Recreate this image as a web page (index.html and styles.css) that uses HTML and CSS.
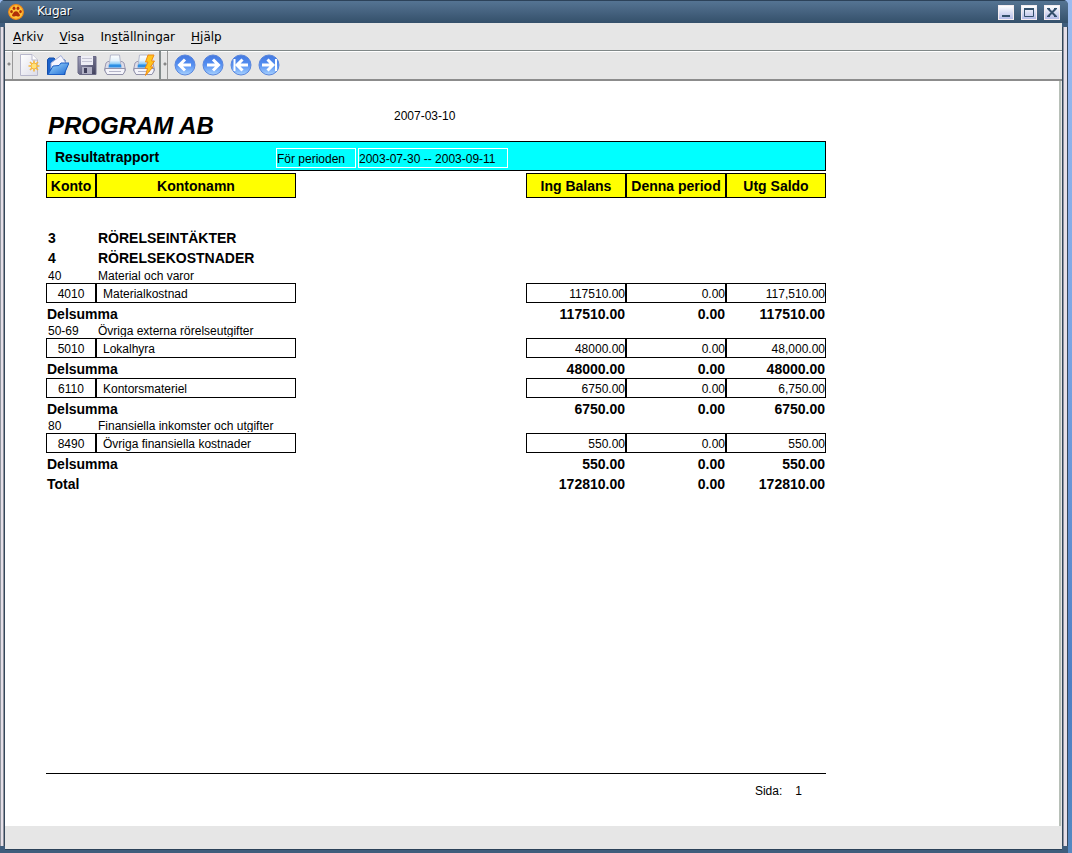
FILE: index.html
```html
<!DOCTYPE html>
<html lang="sv">
<head>
<meta charset="utf-8">
<title>Kugar</title>
<link rel="stylesheet" href="styles.css">
</head>
<body>
<svg class="defs" width="0" height="0" aria-hidden="true">
  <defs>
    <linearGradient id="blue" x1="0" y1="0" x2="0" y2="1"><stop offset="0" stop-color="#4478e0"/><stop offset=".5" stop-color="#5590f2"/><stop offset="1" stop-color="#a8d2ff"/></linearGradient>
    <linearGradient id="folder" x1="0" y1="0" x2="1" y2="1"><stop offset="0" stop-color="#a4dcff"/><stop offset="1" stop-color="#1c6ad4"/></linearGradient>
    <linearGradient id="page" x1="0" y1="0" x2="1" y2="1"><stop offset="0" stop-color="#fff"/><stop offset="1" stop-color="#dcdce8"/></linearGradient>
    <linearGradient id="metal" x1="0" y1="0" x2="1" y2="1"><stop offset="0" stop-color="#a4a4c0"/><stop offset="1" stop-color="#3c3c58"/></linearGradient>
    <linearGradient id="sheet" x1="0" y1="0" x2="0" y2="1"><stop offset="0" stop-color="#fff"/><stop offset=".5" stop-color="#e4f2fc"/><stop offset="1" stop-color="#56b4f4"/></linearGradient>
    <g id="printer">
      <path d="M2 9 4 7.500H18L20 9 21.500 16 19 20H3L.5 16Z" fill="#dcdce8" stroke="#9a9ab2"/>
      <path d="M6.500 1H15.500L17 12H5Z" fill="url(#sheet)" stroke="#b4b8cc"/>
      <path d="M5 10.500H17L17.500 13.500H4.500Z" fill="#2c8ee4"/>
      <path d="M1 14.500H21V17L19 20.500H3L1 17Z" fill="#f4f4fa" stroke="#9292aa"/>
      <path d="M5 17.500H17" stroke="#b4b4c8"/>
    </g>
  </defs>
</svg>
<div class="window">
  <header class="titlebar">
    <svg class="app-icon" viewBox="0 0 16 16" width="16" height="16" aria-hidden="true">
      <circle cx="8" cy="8" r="7.300" fill="#ffc43a" stroke="#f58a16" stroke-width="1.200"/>
      <g fill="#b03008"><ellipse cx="3.500" cy="7.600" rx="1.300" ry="1.600"/><ellipse cx="6" cy="4.200" rx="1.400" ry="1.700"/><ellipse cx="10" cy="4.200" rx="1.400" ry="1.700"/><ellipse cx="12.500" cy="7.600" rx="1.300" ry="1.600"/><path d="M8 7.200C10 7.200 10.500 9 11.600 10.300 12.500 12 11.300 13 9.800 12.400Q8 11.800 6.200 12.400C4.700 13 3.500 12 4.400 10.300 5.500 9 6 7.200 8 7.200Z"/></g>
    </svg>
    <h1 class="app-name">Kugar</h1>
    <div class="window-buttons">
      <button class="wbtn" aria-label="Minimera"><svg viewBox="0 0 14 13" width="14" height="13"><path d="M3 10H11" stroke="#34506c" stroke-width="2"/></svg></button>
      <button class="wbtn" aria-label="Maximera"><svg viewBox="0 0 14 13" width="14" height="13"><path d="M2.500 3V10.500H11.500V3" fill="none" stroke="#34506c"/><path d="M2 3H12" stroke="#34506c" stroke-width="2"/></svg></button>
      <button class="wbtn" aria-label="Stäng"><svg viewBox="0 0 14 13" width="14" height="13"><path d="M3 2.500 11 10.500M11 2.500 3 10.500" stroke="#34506c" stroke-width="2"/><path d="M2 2.500H5M9 2.500H12M2 10.500H5M9 10.500H12" stroke="#34506c"/></svg></button>
    </div>
  </header>
  <div class="frame">
    <nav class="menubar">
      <button class="menu"><u>A</u>rkiv</button>
      <button class="menu"><u>V</u>isa</button>
      <button class="menu">In<u>s</u>tällningar</button>
      <button class="menu"><u>H</u>jälp</button>
    </nav>
    <div class="toolbar">
      <span class="grip"></span>
      <div class="tools file-tools">
        <button class="tool" aria-label="Ny"><svg viewBox="0 0 22 22" width="22" height="22"><path d="M1.500 .5H13L18.500 6V21.500H1.500Z" fill="url(#page)" stroke="#b8b8cc"/><path d="M13 .5V6H18.500" fill="#fff" stroke="#b8b8cc"/><path d="M15 6.500V17.500M9.500 12H20.500M11 8 19 16M19 8 11 16" stroke="#f7b73c" stroke-width="1.600"/><circle cx="15" cy="12" r="3" fill="#ffe27a" stroke="#f5b640"/></svg></button>
        <button class="tool" aria-label="Öppna"><svg viewBox="0 0 22 22" width="22" height="22"><path d="M.5 20.500V5.500L2 4H7L9 6H18V20.500Z" fill="#1c64cc" stroke="#164ea8"/><path d="M4 9 14 1.500 19.500 10V15H4Z" fill="#f6f6ff" stroke="#a4b0d8"/><path d="M1 20.500 6 12 12 11.500 14 9H22L17 20.500Z" fill="url(#folder)" stroke="#1c5ec4"/></svg></button>
        <button class="tool" aria-label="Spara"><svg viewBox="0 0 22 22" width="22" height="22"><path d="M2 2.500H20V20.500H3.500L2 19Z" fill="url(#metal)" stroke="#6a6a86"/><path d="M5 2H17V11H5Z" fill="#eeeef6"/><path d="M6 4.500H16M6 7.500H16" stroke="#c4c4d4"/><path d="M6 13H16V20H6Z" fill="#b0b0c4"/><path d="M8 14H11V19H8Z" fill="#40405c"/></svg></button>
        <button class="tool" aria-label="Skriv ut"><svg viewBox="0 0 22 22" width="22" height="22"><use href="#printer"/></svg></button>
        <button class="tool" aria-label="Snabbutskrift"><svg viewBox="0 0 22 22" width="22" height="22"><use href="#printer"/><path d="M15 1H21L18.500 7H21.500L17.500 13H20L12.500 21.500 14.500 14.500H12L15 8H12.500Z" fill="#ffc51c" stroke="#f08a14"/></svg></button>
      </div>
      <span class="grip divided"></span>
      <div class="tools">
        <button class="tool" aria-label="Föregående sida"><svg viewBox="0 0 22 22" width="22" height="22"><circle cx="11" cy="11" r="10" fill="url(#blue)" stroke="#5a86dc"/><path d="M17 11H6M11 5.500 5.500 11 11 16.500" fill="none" stroke="#fff" stroke-width="3"/></svg></button>
        <button class="tool" aria-label="Nästa sida"><svg viewBox="0 0 22 22" width="22" height="22"><circle cx="11" cy="11" r="10" fill="url(#blue)" stroke="#5a86dc"/><path d="M5 11H16M11 5.500 16.500 11 11 16.500" fill="none" stroke="#fff" stroke-width="3"/></svg></button>
        <button class="tool" aria-label="Första sidan"><svg viewBox="0 0 22 22" width="22" height="22"><circle cx="11" cy="11" r="10" fill="url(#blue)" stroke="#5a86dc"/><path d="M18 11H8M12.500 5.500 7 11 12.500 16.500" fill="none" stroke="#fff" stroke-width="3"/><path d="M4.500 5V17" stroke="#fff" stroke-width="2"/></svg></button>
        <button class="tool" aria-label="Sista sidan"><svg viewBox="0 0 22 22" width="22" height="22"><circle cx="11" cy="11" r="10" fill="url(#blue)" stroke="#5a86dc"/><path d="M4 11H14M9.500 5.500 15 11 9.500 16.500" fill="none" stroke="#fff" stroke-width="3"/><path d="M18 5V17" stroke="#fff" stroke-width="2"/></svg></button>
      </div>
    </div>
    <main class="viewer">
      <article class="report">
        <div class="report-head">
          <h2 class="company">PROGRAM AB</h2>
          <time class="date">2007-03-10</time>
        </div>
        <div class="band">
          <h3 class="report-name">Resultatrapport</h3>
          <span class="field label">För perioden</span>
          <span class="field range">2003-07-30 -- 2003-09-11</span>
        </div>
        <table class="accounts">
          <colgroup><col class="c-no"><col class="c-name"><col class="c-gap"><col class="c-sum"><col class="c-sum"><col class="c-sum"></colgroup>
          <thead>
            <tr><th>Konto</th><th>Kontonamn</th><td></td><th>Ing Balans</th><th>Denna period</th><th>Utg Saldo</th></tr>
          </thead>
          <tbody>
            <tr class="spacer"><td colspan="6"></td></tr>
            <tr class="section"><td>3</td><td colspan="5">RÖRELSEINTÄKTER</td></tr>
            <tr class="section"><td>4</td><td colspan="5">RÖRELSEKOSTNADER</td></tr>
            <tr class="group"><td><div>40</div></td><td colspan="5"><div>Material och varor</div></td></tr>
            <tr class="account"><td>4010</td><td>Materialkostnad</td><td></td><td>117510.00</td><td>0.00</td><td>117,510.00</td></tr>
            <tr class="sum"><td colspan="3">Delsumma</td><td>117510.00</td><td>0.00</td><td>117510.00</td></tr>
            <tr class="group"><td><div>50-69</div></td><td colspan="5"><div>Övriga externa rörelseutgifter</div></td></tr>
            <tr class="account"><td>5010</td><td>Lokalhyra</td><td></td><td>48000.00</td><td>0.00</td><td>48,000.00</td></tr>
            <tr class="sum"><td colspan="3">Delsumma</td><td>48000.00</td><td>0.00</td><td>48000.00</td></tr>
            <tr class="account"><td>6110</td><td>Kontorsmateriel</td><td></td><td>6750.00</td><td>0.00</td><td>6,750.00</td></tr>
            <tr class="sum"><td colspan="3">Delsumma</td><td>6750.00</td><td>0.00</td><td>6750.00</td></tr>
            <tr class="group"><td><div>80</div></td><td colspan="5"><div>Finansiella inkomster och utgifter</div></td></tr>
            <tr class="account"><td>8490</td><td>Övriga finansiella kostnader</td><td></td><td>550.00</td><td>0.00</td><td>550.00</td></tr>
            <tr class="sum"><td colspan="3">Delsumma</td><td>550.00</td><td>0.00</td><td>550.00</td></tr>
            <tr class="sum"><td colspan="3">Total</td><td>172810.00</td><td>0.00</td><td>172810.00</td></tr>
          </tbody>
        </table>
        <footer class="report-foot"><span>Sida:</span><span>1</span></footer>
      </article>
    </main>
    <div class="statusbar"></div>
  </div>
</div>
</body>
</html>
```
FILE: styles.css
```css
* { box-sizing: border-box; }
body {
  margin: 0;
  padding-right: 4px;
  background: linear-gradient(#9cbcf0, #7ba5e4 40%, #4f7fc4 80%, #5489c2);
  font-family: "DejaVu Sans", Verdana, sans-serif;
  font-size: 12px;
  color: #000;
}
button { margin: 0; padding: 0; border: 0; background: none; font: inherit; color: inherit; }
svg { display: block; }
h1, h2, h3 { margin: 0; font-size: inherit; }
.defs { position: absolute; }

/* Side strips of the window frame, with darker blocks at the four corners. */
.window {
  display: flex;
  flex-direction: column;
  min-height: 100vh;
  border-radius: 5px 5px 0 0;
  overflow: hidden;
  background:
    linear-gradient(#3f5d7c, #3f5d7c) left top / 100% 27px no-repeat,
    linear-gradient(#3f5d7c, #3f5d7c) left bottom / 100% 7px no-repeat,
    linear-gradient(to right, #8e949e 1px, #e6dfe8 1px 3px, #8e949e 3px 4px, #34465a 4px 5px, transparent 5px),
    linear-gradient(to left, #34465a 1px, #e6dfe8 1px 4px, #8e949e 4px 5px, #34465a 5px 6px, transparent 6px);
}
.titlebar {
  display: flex;
  align-items: center;
  height: 23px;
  padding: 0 8px;
  border-top: 1px solid #2c4259;
  background: linear-gradient(#557493, #45627f 50%, #34506a);
  color: #fff;
}
.app-name { margin-left: 13px; font-weight: 400; line-height: 18px; padding-bottom: 2px; text-shadow: 1px 1px 0 #101820; }
.window-buttons { display: flex; gap: 7px; margin-left: auto; }
.wbtn {
  display: grid;
  place-items: center;
  width: 16px;
  height: 15px;
  border: 1px solid #f4ecf0;
  background: linear-gradient(#fff, #b4bce8);
}

.frame {
  display: flex;
  flex: 1;
  flex-direction: column;
  margin: 0 6px 3px 5px;
  border-bottom: 1px solid #2c4259;
  background: #e6e6e6;
}
.menubar {
  display: flex;
  align-items: center;
  gap: 16px;
  height: 27px;
  padding: 0 8px;
}
.menu { line-height: 20px; }
.menu u { text-underline-offset: 2px; }
.toolbar {
  display: flex;
  height: 31px;
  border-top: 1px solid #808888;
  border-bottom: 2px solid #8c8c8c;
  box-shadow: inset 0 1px #fff;
}
.grip {
  display: grid;
  place-items: center;
  width: 8px;
  border-right: 1px solid #999;
  background: radial-gradient(circle at 4px 13px, #888 1px, transparent 2px);
}
.divided { width: 9px; border-left: 2px solid #848c8c; }
.tools { display: flex; padding: 0 3px; }
.file-tools { padding-right: 1px; }
.tool { display: grid; place-items: center; width: 28px; height: 28px; }
.file-tools .tool:nth-child(odd):not(:first-child) { width: 29px; }

.viewer {
  display: flex;
  flex: 1;
  border-right: 2px solid #b8c0b8;
  margin-right: 1px;
  background: #fff;
}
.report {
  display: flex;
  flex-direction: column;
  width: 821px;
  padding: 26px 0 26px 41px;
  font-family: "Liberation Sans", Arial, sans-serif;
}
.report-head {
  display: grid;
  grid-template-columns: 346px 1fr;
  height: 34px;
  padding-left: 2px;
}
.company { font-size: 24px; line-height: 37px; font-style: italic; }
.date { line-height: 18px; }
.band {
  display: flex;
  height: 30px;
  padding-left: 8px;
  border: 1px solid #000;
  background: #0ff;
}
.report-name { width: 221px; font-size: 14px; line-height: 30px; }
.field {
  height: 20px;
  margin-top: 6px;
  border: 1px solid #fff;
  line-height: 20px;
  white-space: nowrap;
}
.label { width: 80px; }
.range { width: 150px; margin-left: 2px; }

.accounts {
  width: 780px;
  margin-top: 2px;
  border-spacing: 0;
  table-layout: fixed;
}
.c-no { width: 50px; }
.c-name { width: 200px; }
.c-gap { width: 230px; }
.c-sum { width: 100px; }
.accounts th, .accounts td { padding: 0; white-space: nowrap; }
.accounts th {
  height: 25px;
  padding-top: 1px;
  border: 1px solid #000;
  background: #ff0;
  font-size: 14px;
  line-height: 22px;
}
.spacer td { height: 30px; }
.section td { height: 20px; padding-left: 2px; font-size: 14px; font-weight: 700; line-height: 20px; }
.group td { height: 15px; padding-left: 2px; vertical-align: top; }
.group div { height: 14px; overflow: hidden; line-height: 16px; }
.account td { height: 20px; padding-top: 2px; border: 1px solid #000; line-height: 16px; text-align: right; }
.account td:nth-child(1) { text-align: center; }
.account td:nth-child(2) { padding-left: 6px; text-align: left; }
.account td:nth-child(3) { border: 0; }
.sum td { height: 20px; padding: 2px 1px 0 0; font-size: 14px; font-weight: 700; line-height: 18px; text-align: right; }
.sum td:first-child { padding-left: 1px; text-align: left; }

.report-foot {
  display: flex;
  gap: 13px;
  justify-content: flex-end;
  margin-top: auto;
  padding: 8px 24px 0 0;
  border-top: 1px solid #000;
  line-height: 18px;
}
.statusbar { height: 23px; }
```
